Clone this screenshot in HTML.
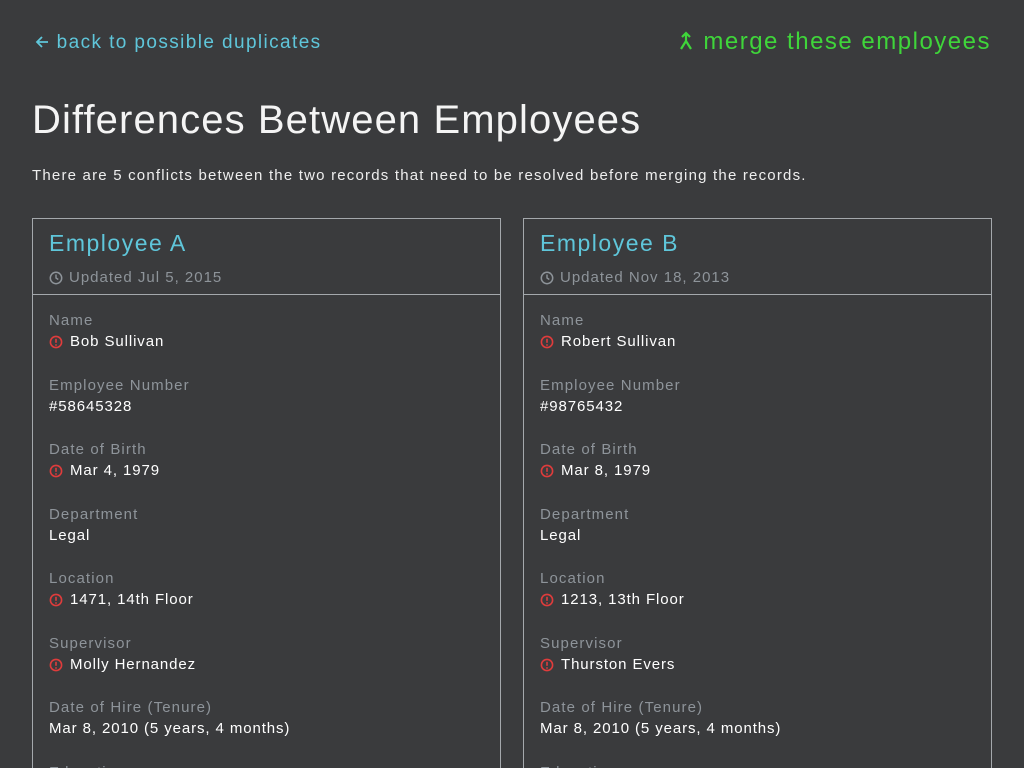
<!DOCTYPE html>
<html><head><meta charset="utf-8"><style>
*{margin:0;padding:0;box-sizing:border-box}
html,body{width:1024px;height:768px;overflow:hidden;background:#3a3b3d;font-family:"Liberation Sans",sans-serif;color:#fff}
.back{position:absolute;left:34px;top:32px;font-size:19px;color:#5fc6da;letter-spacing:1.4px}
.merge{position:absolute;right:33px;top:28px;font-size:24px;color:#3fd53a;letter-spacing:1.5px}
h1{position:absolute;left:32px;top:98px;font-size:40px;font-weight:normal;letter-spacing:1.1px;color:#f4f4f4}
.desc{position:absolute;left:32px;top:167px;font-size:15px;color:#eee;letter-spacing:1.2px}
.card{position:absolute;top:218px;width:469px;height:550px;border:1px solid #a4a8ac;border-bottom:none;overflow:hidden}
.hd{height:76px;border-bottom:1px solid #a4a8ac;padding:10px 16px}
.hd .t{font-size:23px;color:#5fc6da;letter-spacing:1.5px;line-height:28px}
.hd .u{font-size:15px;color:#8e949a;margin-top:12px;display:flex;align-items:center;gap:6px;letter-spacing:1px}
.f{position:absolute;left:16px}
.l{font-size:15px;color:#8e949a;line-height:20px;letter-spacing:1.1px}
.v{font-size:15px;color:#fff;line-height:22px;display:flex;align-items:center;gap:7px;letter-spacing:0.9px}
</style></head><body>
<div class="back"><svg width="16" height="14" viewBox="0 0 16 14" style="vertical-align:-1px"><path d="M14 7H3M8 2L3 7l5 5" fill="none" stroke="#5fc6da" stroke-width="1.8"/></svg> back to possible duplicates</div>
<div class="merge"><svg width="18" height="20" viewBox="0 0 18 20" style="vertical-align:-2px"><path d="M9 2v8M5 6l4-4 4 4M9 10l-5 8M9 10l5 8" fill="none" stroke="#3fd53a" stroke-width="2.2"/></svg> merge these employees</div>
<h1>Differences Between Employees</h1>
<div class="desc">There are 5 conflicts between the two records that need to be resolved before merging the records.</div>

<div class="card" style="left:32px">
<div class="hd"><div class="t">Employee A</div><div class="u"><svg width="14" height="14" viewBox="0 0 14 14"><circle cx="7" cy="7" r="5.7" fill="none" stroke="#8e949a" stroke-width="1.5"/><path d="M7 3.5V7l2.3 1.5" fill="none" stroke="#8e949a" stroke-width="1.4"/></svg>Updated Jul 5, 2015</div></div>
<div class="f" style="top:92px"><div class="l">Name</div><div class="v"><svg width="14" height="14" viewBox="0 0 14 14"><circle cx="7" cy="7" r="5.6" fill="none" stroke="#e03c3c" stroke-width="1.6"/><path d="M7 3.8v4" stroke="#e03c3c" stroke-width="1.6"/><circle cx="7" cy="10" r="0.9" fill="#e03c3c"/></svg>Bob Sullivan</div></div>
<div class="f" style="top:157px"><div class="l">Employee Number</div><div class="v">#58645328</div></div>
<div class="f" style="top:221px"><div class="l">Date of Birth</div><div class="v"><svg width="14" height="14" viewBox="0 0 14 14"><circle cx="7" cy="7" r="5.6" fill="none" stroke="#e03c3c" stroke-width="1.6"/><path d="M7 3.8v4" stroke="#e03c3c" stroke-width="1.6"/><circle cx="7" cy="10" r="0.9" fill="#e03c3c"/></svg>Mar 4, 1979</div></div>
<div class="f" style="top:286px"><div class="l">Department</div><div class="v">Legal</div></div>
<div class="f" style="top:350px"><div class="l">Location</div><div class="v"><svg width="14" height="14" viewBox="0 0 14 14"><circle cx="7" cy="7" r="5.6" fill="none" stroke="#e03c3c" stroke-width="1.6"/><path d="M7 3.8v4" stroke="#e03c3c" stroke-width="1.6"/><circle cx="7" cy="10" r="0.9" fill="#e03c3c"/></svg>1471, 14th Floor</div></div>
<div class="f" style="top:415px"><div class="l">Supervisor</div><div class="v"><svg width="14" height="14" viewBox="0 0 14 14"><circle cx="7" cy="7" r="5.6" fill="none" stroke="#e03c3c" stroke-width="1.6"/><path d="M7 3.8v4" stroke="#e03c3c" stroke-width="1.6"/><circle cx="7" cy="10" r="0.9" fill="#e03c3c"/></svg>Molly Hernandez</div></div>
<div class="f" style="top:479px"><div class="l">Date of Hire (Tenure)</div><div class="v">Mar 8, 2010 (5 years, 4 months)</div></div>
<div class="f" style="top:544px"><div class="l">Education</div></div>
</div>

<div class="card" style="left:523px">
<div class="hd"><div class="t">Employee B</div><div class="u"><svg width="14" height="14" viewBox="0 0 14 14"><circle cx="7" cy="7" r="5.7" fill="none" stroke="#8e949a" stroke-width="1.5"/><path d="M7 3.5V7l2.3 1.5" fill="none" stroke="#8e949a" stroke-width="1.4"/></svg>Updated Nov 18, 2013</div></div>
<div class="f" style="top:92px"><div class="l">Name</div><div class="v"><svg width="14" height="14" viewBox="0 0 14 14"><circle cx="7" cy="7" r="5.6" fill="none" stroke="#e03c3c" stroke-width="1.6"/><path d="M7 3.8v4" stroke="#e03c3c" stroke-width="1.6"/><circle cx="7" cy="10" r="0.9" fill="#e03c3c"/></svg>Robert Sullivan</div></div>
<div class="f" style="top:157px"><div class="l">Employee Number</div><div class="v">#98765432</div></div>
<div class="f" style="top:221px"><div class="l">Date of Birth</div><div class="v"><svg width="14" height="14" viewBox="0 0 14 14"><circle cx="7" cy="7" r="5.6" fill="none" stroke="#e03c3c" stroke-width="1.6"/><path d="M7 3.8v4" stroke="#e03c3c" stroke-width="1.6"/><circle cx="7" cy="10" r="0.9" fill="#e03c3c"/></svg>Mar 8, 1979</div></div>
<div class="f" style="top:286px"><div class="l">Department</div><div class="v">Legal</div></div>
<div class="f" style="top:350px"><div class="l">Location</div><div class="v"><svg width="14" height="14" viewBox="0 0 14 14"><circle cx="7" cy="7" r="5.6" fill="none" stroke="#e03c3c" stroke-width="1.6"/><path d="M7 3.8v4" stroke="#e03c3c" stroke-width="1.6"/><circle cx="7" cy="10" r="0.9" fill="#e03c3c"/></svg>1213, 13th Floor</div></div>
<div class="f" style="top:415px"><div class="l">Supervisor</div><div class="v"><svg width="14" height="14" viewBox="0 0 14 14"><circle cx="7" cy="7" r="5.6" fill="none" stroke="#e03c3c" stroke-width="1.6"/><path d="M7 3.8v4" stroke="#e03c3c" stroke-width="1.6"/><circle cx="7" cy="10" r="0.9" fill="#e03c3c"/></svg>Thurston Evers</div></div>
<div class="f" style="top:479px"><div class="l">Date of Hire (Tenure)</div><div class="v">Mar 8, 2010 (5 years, 4 months)</div></div>
<div class="f" style="top:544px"><div class="l">Education</div></div>
</div>
</body></html>
